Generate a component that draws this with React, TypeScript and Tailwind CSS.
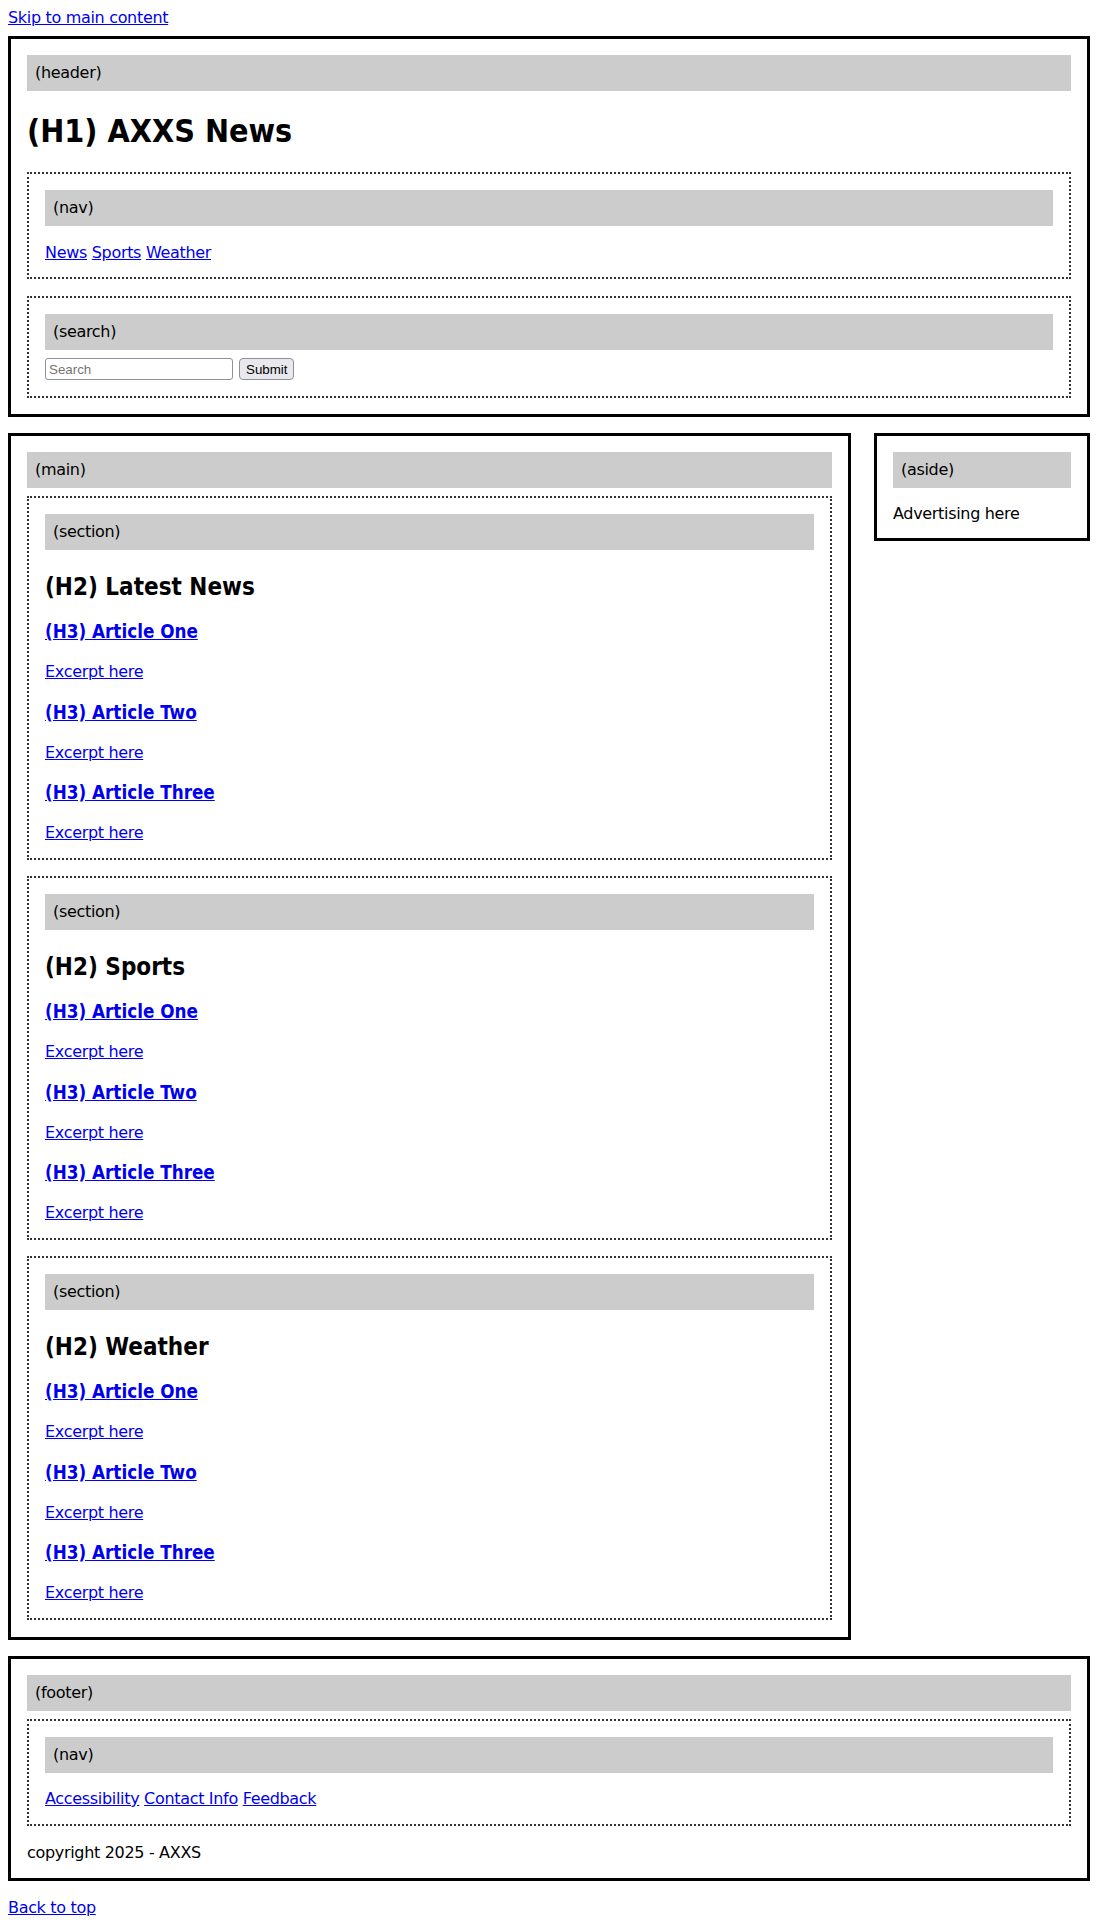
import React from 'react'

const body = "font-['DejaVu_Sans',sans-serif] text-[16px] leading-[19px] tracking-[-0.02em] text-black"
const heading = "font-['DejaVu_Sans_Condensed','DejaVu_Sans',sans-serif] font-stretch-condensed font-bold tracking-normal"
const link = 'text-[#0000ee] underline'

// grey tag shown at the top of each landmark
const Tag: React.FC<{ name: string }> = ({ name }) => (
    <div className='bg-[#cccccc] px-2 py-2 leading-5'>({name})</div>
)

const Article: React.FC<{ title: string; first?: boolean }> = ({ title, first }) => (
    <>
        <h3 className={`${heading} text-[18.72px] leading-[23px] ${first ? 'mt-[19px]' : 'mt-[19.5px]'}`}>
            <a href='#' className={link}>(H3) {title}</a>
        </h3>
        <p className='mt-[19px]'>
            <a href='#' className={link}>Excerpt here</a>
        </p>
    </>
)

const Section: React.FC<{ title: string; first?: boolean }> = ({ title, first }) => (
    <section className={`border-2 border-dotted border-[#333] p-4 ${first ? 'mt-2' : 'mt-4'}`}>
        <Tag name='section' />
        <h2 className={`${heading} text-[24px] leading-[28px] mt-[23px]`}>(H2) {title}</h2>
        <Article title='Article One' first />
        <Article title='Article Two' />
        <Article title='Article Three' />
    </section>
)

const App: React.FC = () => {
    return (
        <div className={`${body} p-2 bg-white min-h-screen`}>
            <a href='#main' className={link}>Skip to main content</a>

            <header className='mt-[9px] border-[3px] border-black p-4'>
                <Tag name='header' />
                <h1 className={`${heading} text-[32px] leading-[38px] mt-[21px] mb-[22px]`}>(H1) AXXS News</h1>
                <nav className='border-2 border-dotted border-[#333] px-4 pt-4 pb-[15px]'>
                    <Tag name='nav' />
                    <div className='mt-[17px]'>
                        <a href='#' className={link}>News</a>{' '}
                        <a href='#' className={link}>Sports</a>{' '}
                        <a href='#' className={link}>Weather</a>
                    </div>
                </nav>
                <div className='mt-[17px] border-2 border-dotted border-[#333] p-4'>
                    <Tag name='search' />
                    <form className="mt-2 flex h-[22px] items-stretch gap-[6px] font-['Liberation_Sans',sans-serif] text-[13.33px] tracking-normal">
                        <input
                            type='text'
                            placeholder='Search'
                            className='w-[188px] rounded-[3px] border border-[#8f8f9d] px-[3px] placeholder:text-[#757575] bg-white'
                        />
                        <button type='submit' className='rounded-[4px] border border-[#8f8f9d] bg-[#e9e9ed] px-[6px]'>
                            Submit
                        </button>
                    </form>
                </div>
            </header>

            <div className='mt-4 flex items-start justify-between'>
                <main id='main' className='w-[843px] border-[3px] border-black px-4 pt-4 pb-[17px]'>
                    <Tag name='main' />
                    <Section title='Latest News' first />
                    <Section title='Sports' />
                    <Section title='Weather' />
                </main>
                <aside className='w-[216px] border-[3px] border-black px-4 pt-4 pb-[15px]'>
                    <Tag name='aside' />
                    <p className='mt-[17px] leading-[18px]'>Advertising here</p>
                </aside>
            </div>

            <footer className='mt-4 border-[3px] border-black p-4'>
                <Tag name='footer' />
                <nav className='mt-2 border-2 border-dotted border-[#333] p-4'>
                    <Tag name='nav' />
                    <div className='mt-4'>
                        <a href='#' className={link}>Accessibility</a>{' '}
                        <a href='#' className={link}>Contact Info</a>{' '}
                        <a href='#' className={link}>Feedback</a>
                    </div>
                </nav>
                <p className='mt-[17px]'>copyright 2025 - AXXS</p>
            </footer>

            <div className='mt-[17px]'>
                <a href='#' className={link}>Back to top</a>
            </div>
        </div>
    )
}

export default App
